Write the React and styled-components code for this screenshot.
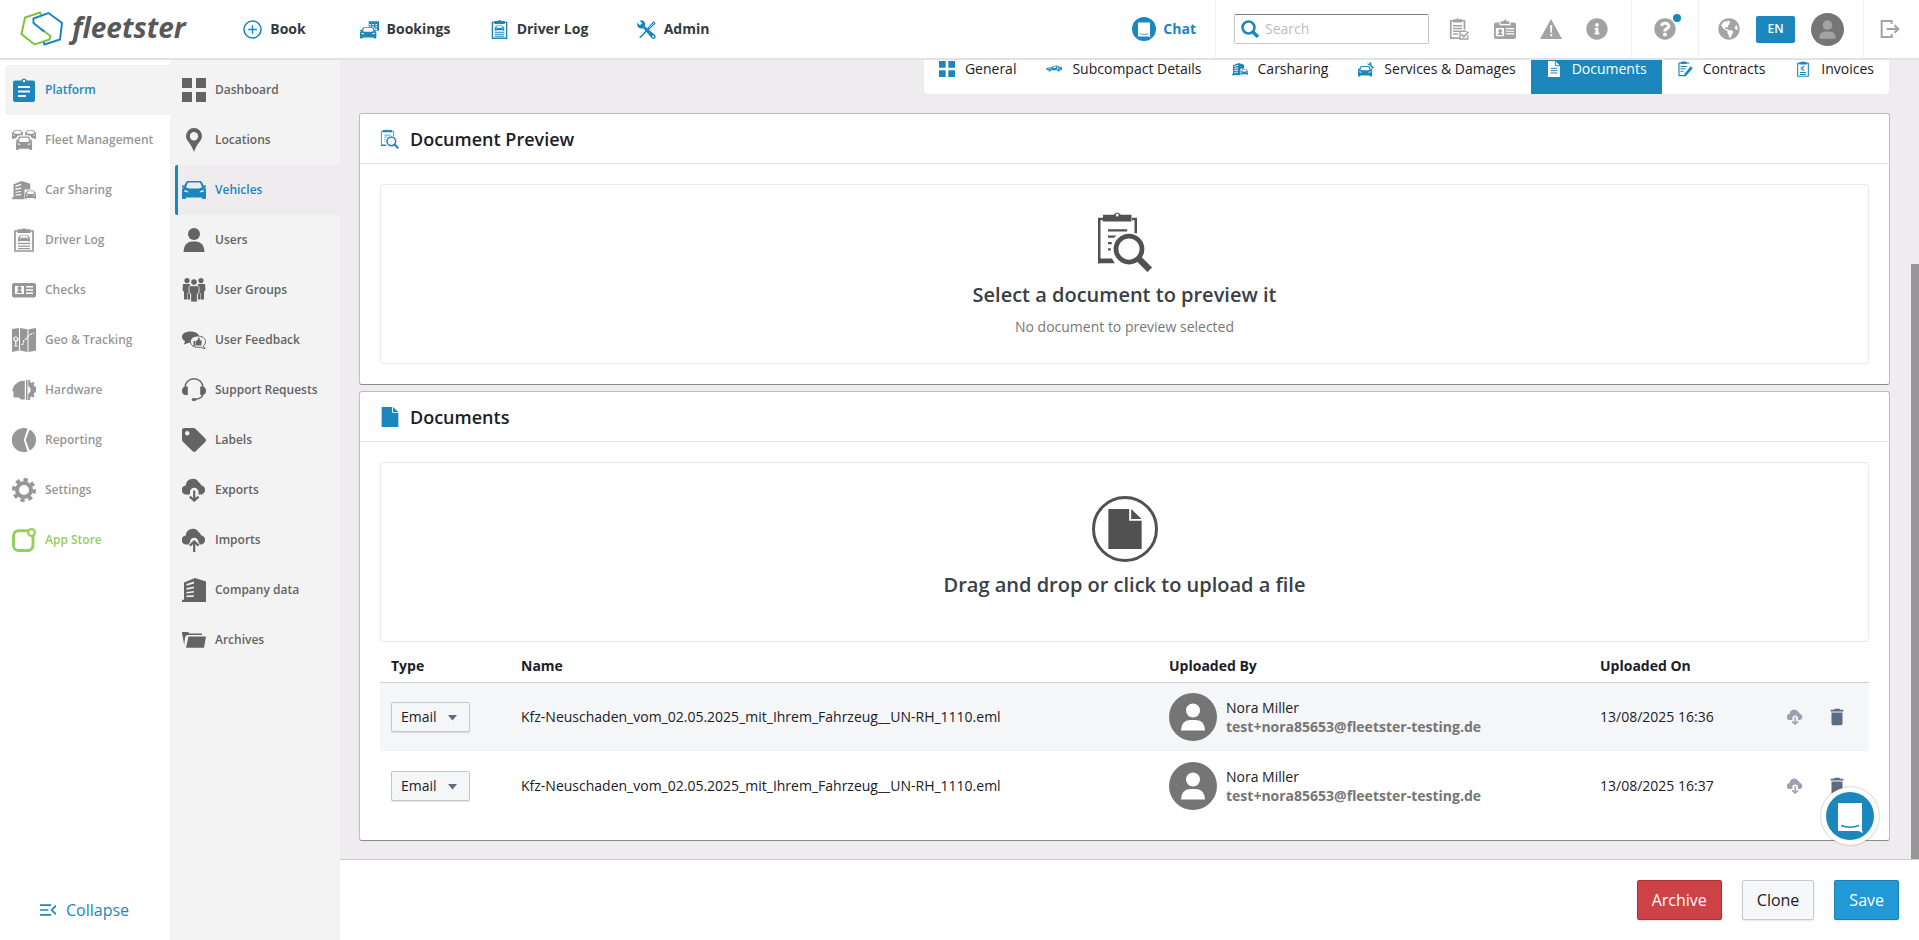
import React from "react";
import styled, { createGlobalStyle } from "styled-components";
import { FaInfoCircle, FaQuestionCircle, FaGlobeAmericas, FaTag } from "react-icons/fa";
import { MdDelete } from "react-icons/md";

const blue = "#1c87bd";

const GlobalStyle = createGlobalStyle`
    * {
        box-sizing: border-box;
    }
    body {
        margin: 0;
        background: #ffffff;
        color: #1b2026;
        font-family: "Open Sans", "Noto Sans", sans-serif;
        font-size: 14px;
        line-height: 20px;
    }
    button, input, select {
        font: inherit;
        color: inherit;
        margin: 0;
    }
    a {
        color: inherit;
        text-decoration: none;
    }
    svg {
        display: block;
        flex-shrink: 0;
    }
    h2, h3, p {
        margin: 0;
    }
`

const Svg = ({ size = 24, children }) => (
    <svg width={size} height={size} viewBox="0 0 24 24" fill="currentColor" aria-hidden="true">
        {children}
    </svg>
)

/* drawings shared by several icons */

const CarShape = () => (
    <>
        <path fillRule="evenodd" d="M5.6 0h12.8l1.4.8 2.6 5.2 1.6 2V17l-.8 1h-2.8l-.6-1.6H4.2L3.6 18H.8L0 17V8l1.6-2L4.2.8zM6 1.5 3.9 6.2 7 7.4h10l3.1-1.2L18 1.5zM2 9l.6 1.8 4 .6L5.4 9.8zm20 0-.6 1.8-4 .6 1.2-1.6z" />
        <path d="M0 4.6h2.6v1.6H0zM21.4 4.6H24v1.6h-2.6z" />
    </>
)

const TowerShape = () => (
    <path fillRule="evenodd" d="M13 0l11 3.6V24H0v-2.2h2V4.400zM4.500 6v1.800L12 5.400V3.600zm0 4v1.800l7.500-1.600V8.400zm0 4v1.600l7.500-1V13zm0 3.600v1.600l7.500-.4v-1.600z" />
)

const CloudShape = () => (
    <path d="M8 16.500H4.500A4.500 4.500 0 0 1 3.800 7.500 7 7 0 0 1 17 4.600 3.500 3.500 0 0 1 19 7.300 4.700 4.700 0 0 1 19.500 16.500H16.500V14a4.200 4.200 0 0 0-8.500 0z" />
)

const ClipFrame = () => (
    <>
        <path d="M4 3.500h16V23H4z" fill="none" stroke="currentColor" strokeWidth="1.600" />
        <path d="M6.500 1.400h4Q12-.8 13.500 1.400h4v3.800h-11z" />
    </>
)

const icons = {
    platform: (
        <>
            <path fillRule="evenodd" d="M3 2.500h6.200a3 3 0 0 1 5.600 0H21a2 2 0 0 1 2 2V22a2 2 0 0 1-2 2H3a2 2 0 0 1-2-2V4.500a2 2 0 0 1 2-2zM6 8v2h12V8zm0 4.500v2h12v-2zM6 17v2h8v-2z" />
            <circle cx="12" cy="3" r="1.200" fill="#ffffff" />
        </>
    ),
    fleet: (
        <>
            <g transform="translate(0 2) scale(.46 .5)"><CarShape /></g>
            <g transform="translate(13 2) scale(.46 .5)"><CarShape /></g>
            <path d="M6 7.500h12l3 4v10H3v-10z" fill="#ffffff" />
            <g transform="translate(4 8.500) scale(.67 .75)"><CarShape /></g>
        </>
    ),
    sharing: (
        <>
            <g transform="translate(0 3) scale(.76)"><TowerShape /></g>
            <path d="M12.500 11.500H24v10H12.500z" fill="#ffffff" />
            <g transform="translate(13 12.500) scale(.46)"><CarShape /></g>
        </>
    ),
    log: (
        <>
            <path d="M3 3h18v20H3z" fill="none" stroke="currentColor" strokeWidth="1.700" />
            <path d="M5.500 1.300H10Q12-1 14 1.300h4.500V5h-13z" />
            <g transform="translate(6 7) scale(.5 .36)"><CarShape /></g>
            <path d="M6 14.800h12v1.300H6zM6 17.400h12v1.300H6zM6 20h12v1.300H6z" />
        </>
    ),
    checks: (
        <path fillRule="evenodd" d="M2 5h20a2 2 0 0 1 2 2v10.500a2 2 0 0 1-2 2H2a2 2 0 0 1-2-2V7a2 2 0 0 1 2-2zm1 3v8h9V8zm2 7q0-2.500 2-2.800a2 2 0 1 1 1 0q2 .3 2 2.800zm9-7v1.500h7V8zm0 3.200v1.500h7v-1.500zm0 3.200V16h7v-1.600z" />
    ),
    geo: (
        <>
            <path d="M0 1l7-1v22.500L0 24zM8 0l7.500 1.200V24L8 22.600zM16.500 1.200L24 0v22.500L16.500 24z" />
            <g fill="none" stroke="#ffffff">
                <circle cx="3.800" cy="11" r="2" strokeWidth="1.200" />
                <path d="M3.800 13v4M2 18h3.600" strokeWidth="1.200" />
                <path d="M9.500 17l2-1.500V13l3-2.500L17 7l5-2" strokeWidth="1.200" strokeDasharray="2.500 1" />
            </g>
        </>
    ),
    hardware: (
        <>
            <path d="M12.800 2.500v19H9l-2-2H1.500V14L0 12l1.500-2V8L7 3.500z" />
            <path d="M14 2h1.500v20H14z" />
            <path fillRule="evenodd" d="M16.200 2h2v2.300l1.600.7 1.600-1.300 1.200 1.300-1 1.800.8 1.700H24v6h-1.600l-.8 2 1 1.700-1.300 1.300-1.700-1-1.400.8V22h-2zM16.200 8v8a4.500 4.500 0 0 0 0-8z" />
        </>
    ),
    pie: (
        <>
            <path d="M15.500.600A12 12 0 1 0 15.500 23.400L11.800 12z" />
            <path d="M17.600 1.400A12 12 0 0 1 17.600 22.600L13.600 12z" />
        </>
    ),
    gear: (
        <>
            <circle cx="12" cy="12" r="7" fill="none" stroke="currentColor" strokeWidth="4" />
            <circle cx="12" cy="12" r="10.200" fill="none" stroke="currentColor" strokeWidth="3.600" strokeDasharray="4.200 3.810" transform="rotate(-4 12 12)" />
        </>
    ),
    store: (
        <>
            <path d="M16 2.800H6.500A5 5 0 0 0 1.500 7.800v9.700a5 5 0 0 0 5 5H16a5 5 0 0 0 5-5V8" fill="none" stroke="currentColor" strokeWidth="3" />
            <circle cx="19.500" cy="4.500" r="3.400" fill="none" stroke="currentColor" strokeWidth="2.200" />
        </>
    ),
    squares: <path d="M0 0h10v10H0zM14 0h10v10H14zM0 14h10v10H0zM14 14h10v10H14z" />,
    pin: <path fillRule="evenodd" d="M12 0a8 8 0 0 1 8 8.200C20 13 14.500 15.500 12 24 9.500 15.500 4 13 4 8.200A8 8 0 0 1 12 0zm0 4a4.200 4.200 0 1 0 0 8.400A4.200 4.200 0 0 0 12 4z" />,
    car: <g transform="translate(0 3)"><CarShape /></g>,
    user: (
        <>
            <circle cx="12" cy="6" r="6" />
            <path d="M1.500 24q.5-9.500 8-10.500h5q7.500 1 8 10.500z" />
        </>
    ),
    group: (
        <>
            <circle cx="5" cy="2.600" r="2.600" />
            <circle cx="19" cy="2.600" r="2.600" />
            <path d="M1 6h7v15.500H5.500V15H5v6.500H2V14L.5 12zM23 6h-7v15.500h2.500V15h.5v6.500h3V14l1.500-2z" />
            <circle cx="12" cy="4" r="3.600" fill="#f3f3f3" />
            <circle cx="12" cy="4" r="2.800" />
            <path d="M8.500 7.800h7q1.500 0 1.500 1.500V15l-1.700 1v8h-6.600v-8L7 15V9.300q0-1.500 1.500-1.500z" stroke="#f3f3f3" strokeWidth=".8" />
        </>
    ),
    feedback: (
        <>
            <path d="M8.500 3.500c5 0 8.500 2.200 8.500 5.500s-3.500 5.200-8.500 5.200L2 16.500l1-3.600C1 12 0 10.800 0 9c0-3.300 3.500-5.500 8.500-5.500z" />
            <path d="M15.700 8c4.500 0 7.800 2.200 7.800 5.600 0 2-.9 3.300-2.200 4.200l1.700 3-4.600-1.600c-5.600.8-10-1.600-10-5.500C8.400 10.300 11.500 8 15.700 8z" fill="#f3f3f3" stroke="currentColor" strokeWidth="1" />
            <path d="M11.500 13h2v5h-2zM14 13l2-1.500V9.800h1.500l.4 2.600h2l-.6 5.200H14z" />
        </>
    ),
    headset: (
        <>
            <path d="M3 9.500a9 8.800 0 0 1 18 0M21 15q0 5.500-8 6.500" fill="none" stroke="currentColor" strokeWidth="1.400" />
            <path d="M5.800 8.500v8.600H3.500Q0 16.500 0 12.800T3.500 8.500zM18.200 8.500v8.600h2.300q3.500-.6 3.500-4.300t-3.500-4.300z" />
            <ellipse cx="12" cy="21.500" rx="2.400" ry="1.500" />
        </>
    ),
    download: (
        <>
            <CloudShape />
            <path d="M12.200 12.500v10M7.800 18.600l4.400 4 4.400-4" fill="none" stroke="currentColor" strokeWidth="2.200" />
        </>
    ),
    upload: (
        <>
            <CloudShape />
            <path d="M12.200 24V13.500M7.800 17.600l4.400-4 4.400 4" fill="none" stroke="#f3f3f3" strokeWidth="4" />
            <path d="M12.200 24V13.500M7.800 17.600l4.400-4 4.400 4" fill="none" stroke="currentColor" strokeWidth="2.200" />
        </>
    ),
    tower: <TowerShape />,
    folder: (
        <>
            <path d="M0 5V4h6l1.500 1.500H20V7H6Q3.500 7 3 10l-.8 7z" />
            <path d="M6.500 8.500H24L22 19.700H4z" />
        </>
    ),
    plus: (
        <g fill="none" stroke="currentColor">
            <circle cx="12" cy="12" r="10.800" strokeWidth="2" />
            <path d="M12 6.500v11M6.500 12h11" strokeWidth="1.800" />
        </g>
    ),
    bookings: (
        <>
            <path fillRule="evenodd" d="M11 1.500h13v12H11zM12 5v1.500h2V5zm3.500 0v1.500h2V5zm4 0v1.500h2V5zM12 8v1.500h2V8zm3.500 0v1.500h2V8zm4 0v1.500h2V8zm0 3v1.500h2V11z" />
            <path d="M3 9l15 .5 4 5V24H0V12z" fill="#ffffff" />
            <g transform="translate(0 9) scale(.86 .8)"><CarShape /></g>
        </>
    ),
    tools: (
        <>
            <path d="M3.500 22.500L14 11.500" stroke="currentColor" strokeWidth="2" />
            <path d="M13 10.500L20.500 2q2.500 0 2.800 2.600L14.800 12.600z" />
            <path d="M15.500 9.800l6-6" stroke="#ffffff" strokeWidth=".9" />
            <path fillRule="evenodd" d="M0 3.500L3.800 6.500 6.400 4.200 3.500.800q4.500-1.200 6.300 2 1.200 2.500.2 5L23 19q1.500 2.500-.2 4.200-2.400 1.500-4.300-.1L8 10.500q-3.300 1-5.800-.8T0 3.500zM20.500 19.600a1.300 1.300 0 1 0 0 2.600 1.300 1.300 0 0 0 0-2.600z" />
        </>
    ),
    tasks: (
        <>
            <path d="M12 22H3V3h15v9.500" fill="none" stroke="currentColor" strokeWidth="1.900" />
            <path d="M5.500 1.400h3.700Q10.500-.6 11.800 1.400h3.700V5h-10z" />
            <path d="M5.500 7.500h10v1.700h-10zM5.500 10.500h10v1.700h-10zM5.500 13.500h7v1.700h-7zM5.500 16.500H11v1.700H5.500z" />
            <path d="M21.500 19v4H13v-8.500h7" fill="none" stroke="currentColor" strokeWidth="1.600" />
            <path d="M14.500 17.500l2.800 3 5-5.500" fill="none" stroke="currentColor" strokeWidth="1.900" />
        </>
    ),
    badge: (
        <>
            <path fillRule="evenodd" d="M2 5h4v3h12V5h4a2 2 0 0 1 2 2v14a2 2 0 0 1-2 2H2a2 2 0 0 1-2-2V7a2 2 0 0 1 2-2zm0 6v9h9v-9zm2 7.500q0-2.200 2-2.500a2 2 0 1 1 1.500 0q2 .3 2 2.500zM13 11v1.300h9V11zm0 2.800v1.300h9v-1.300zm0 2.800V18h9v-1.400z" />
            <path d="M7.200 3.500h3Q12 0 13.800 3.500h3V6.500H7.200z" />
        </>
    ),
    warning: <path fillRule="evenodd" d="M12 1l12 22H0zM11 8l.4 8h1.600l.4-8zm1.200 9.500a1.300 1.300 0 1 0 0 2.600 1.300 1.300 0 0 0 0-2.600z" />,
    logout: (
        <path d="M14 6V2.500H2v19h12V18M8 12h14M17.500 7.500L22 12l-4.500 4.500" fill="none" stroke="currentColor" strokeWidth="2.400" />
    ),
    search: (
        <>
            <circle cx="10" cy="10" r="8" fill="none" stroke="currentColor" strokeWidth="3.400" />
            <path d="M16 16l6.500 6.500" stroke="currentColor" strokeWidth="4.600" />
        </>
    ),
    sidecar: (
        <>
            <path d="M0 12.500l1-2 6-1.200q5-2.800 9-2.600l4.500 2.100 3.500.7v3.500l-1.500 1H2z" />
            <path d="M8.500 10l4-1.800h2.800V10zM16.500 8.300l3 1.700h-3z" fill="#ffffff" />
            <circle cx="5.500" cy="13.500" r="2.600" stroke="#ffffff" strokeWidth=".8" />
            <circle cx="19" cy="13.500" r="2.600" stroke="#ffffff" strokeWidth=".8" />
        </>
    ),
    service: (
        <>
            <g transform="translate(0 7.500) scale(.88)"><CarShape /></g>
            <path d="M14 3.500l3 1L18 1q2.800 1 2 4.500L24 10l-2 1.500-4.500-5q-3 0-3.500-3z" />
        </>
    ),
    textFile: (
        <>
            <path d="M3 0h11l7 7v17H3z" />
            <path d="M14 0v7h7M7 11h10M7 14.500h10M7 18h10" fill="none" stroke={blue} strokeWidth="1.500" />
        </>
    ),
    contract: (
        <>
            <path d="M17 4V3H3v19h9" fill="none" stroke="currentColor" strokeWidth="1.700" />
            <path d="M5.500 1h3Q10-.8 11.500 1h3v3.500h-9zM5 7.500h10V9H5zM5 11h8v1.500H5zM5 14.500h5V16H5z" />
            <path d="M20.500 8l3 3-9 10.500-4 2 .8-4.500z" />
        </>
    ),
    invoice: (
        <>
            <ClipFrame />
            <path d="M14.500 8q-4.500-1-4.500 3t4.500 3M8.500 10.300h4.500M8.500 12h4.500" fill="none" stroke="currentColor" strokeWidth="1.200" />
            <path d="M7.500 16.500h9V18h-9zM7.500 19.500h9V21h-9z" />
        </>
    ),
    preview: (
        <>
            <path d="M1.700 20.500V2.800H3.200M14.800 2.800h1.500v5.700" fill="none" stroke="currentColor" strokeWidth="1" />
            <path d="M1.200 18.600h5.600l1.100 1.900H1.200zM3.200 1.100h4.300Q8.900-.8 10.300 1.100h4.300v2.700H3.200zM5.200 6.900h7.700v.9H5.200zM5.200 9.400h3.400l-1 .9H5.200zM5.200 12h1.500v.9H5.200zM5.200 14.500h1.100v.9H5.200z" />
            <circle cx="8.900" cy="1.200" r=".6" fill="#ffffff" />
            <circle cx="13.600" cy="14.800" r="5.200" fill="none" stroke="currentColor" strokeWidth="1.900" />
            <path d="M17.200 18.400l4.700 4.700" stroke="currentColor" strokeWidth="2.600" />
        </>
    ),
    file: <path d="M2 0h12.500v7H22v17H2zM15.700 0L22 6H15.700z" />,
    collapse: (
        <path d="M0 4.700h16.500M0 12h12.500M0 19.300h16.500M24 5.500L17.500 12 24 18.500" fill="none" stroke="currentColor" strokeWidth="2.600" />
    ),
}

const Icon = ({ name, size }) => <Svg size={size}>{icons[name]}</Svg>

const ChatGlyph = ({ size }) => (
    <svg width={size} height={size} viewBox="0 0 48 48" aria-hidden="true">
        <circle cx="24" cy="24" r="24" fill={blue} />
        <path d="M12 11h24v26.500l1 3.500-4.500-2H12z" fill="#ffffff" />
        <path d="M15 33.500q9 3.500 18 0" fill="none" stroke={blue} strokeWidth="1.500" />
    </svg>
)

const Avatar = ({ size, tone = "#ffffff" }) => (
    <svg width={size} height={size} viewBox="0 0 48 48" aria-hidden="true">
        <circle cx="24" cy="24" r="24" fill="#757575" />
        <circle cx="24" cy="17.500" r="7" fill={tone} />
        <path d="M12 37.500q.5-10.500 9-10.500h6q8.500 0 9 10.500z" fill={tone} />
    </svg>
)

const LogoMark = () => (
    <svg width="44" height="36" viewBox="0 0 44 36" fill="none" strokeWidth="2" aria-hidden="true">
        <path d="M21 4l-1-2.500L5 6.500 1.500 23 14.500 33.500 29.500 28.500 30.500 25 21.500 18" stroke="#7dc243" />
        <path d="M23.500 31l1 2.500L40 28.500 42 12 28.500 2 13.500 7.500V12L24 20.500" stroke={blue} />
    </svg>
)

const Page = styled.div`
    display: grid;
    grid-template-rows: 60px 1fr;
    height: 100vh;
`

const Header = styled.header`
    display: flex;
    align-items: stretch;
    justify-content: space-between;
    background: #ffffff;
    border-bottom: 2px solid #e3e2e3;
    position: relative;
    z-index: 2;
`

const HeaderLeft = styled.div`
    display: flex;
    align-items: center;
`

const Logo = styled.a`
    display: flex;
    align-items: center;
    gap: 8px;
    width: 211px;
    padding-left: 20px;
`

const LogoText = styled.span`
    font-family: "Open Sans", sans-serif;
    font-size: 28px;
    line-height: 36px;
    font-weight: 700;
    font-style: italic;
    color: #585858;
    padding-bottom: 4px;
`

const TopNav = styled.nav`
    display: grid;
    grid-template-columns: 127px repeat(3, 134px);
`

const TopLink = styled.a`
    display: flex;
    align-items: center;
    justify-content: center;
    gap: 8px;
    font-weight: 700;
    color: #343a40;

    svg {
        color: ${blue};
    }
`

const HeaderRight = styled.div`
    display: flex;
`

const HeaderGroup = styled.div`
    display: flex;
    align-items: center;
    gap: ${props => props.$gap || 16}px;
    padding: ${props => props.$pad};
    border-left: 1px solid ${props => props.$plain ? "transparent" : "#eeeeee"};
    color: #a3a3a3;
`

const ChatLink = styled.a`
    display: flex;
    align-items: center;
    gap: 7px;
    font-size: 14px;
    font-weight: 700;
    color: ${blue};
`

const SearchBox = styled.label`
    display: flex;
    align-items: center;
    gap: 6px;
    width: 195px;
    height: 30px;
    padding: 0 6px;
    border: 1px solid #c4c4c4;
    border-top-color: #7b7b7b;
    border-radius: 2px;
    color: ${blue};
`

const SearchInput = styled.input`
    flex: 1;
    min-width: 0;
    padding: 0;
    border: 0;
    outline: 0;
    background: none;

    &::placeholder {
        color: #bdbdbd;
        opacity: 1;
    }
`

const Shortcuts = styled.div`
    display: flex;
    align-items: center;
    gap: 24px;
`

const IconButton = styled.button`
    display: flex;
    position: relative;
    padding: 0;
    border: 0;
    background: none;
    cursor: pointer;
`

const Dot = styled.span`
    position: absolute;
    top: -4px;
    right: -5px;
    width: 8px;
    height: 8px;
    border-radius: 4px;
    background: ${blue};
`

const LangButton = styled.button`
    width: 39px;
    height: 27px;
    padding: 0;
    border: 0;
    border-radius: 2px;
    background: ${blue};
    color: #ffffff;
    font-size: 12px;
    font-weight: 600;
`

const Body = styled.div`
    display: grid;
    grid-template-columns: 170px 170px minmax(0, 1fr);
    min-height: 0;
`

const Sidebar = styled.nav`
    display: flex;
    flex-direction: column;
    padding: 5px 0 5px 5px;
    background: ${props => props.$sub ? "#f3f3f3" : "#ffffff"};
`

const SideLink = styled.a`
    display: flex;
    align-items: center;
    gap: 9px;
    height: 50px;
    padding-left: 7px;
    border-radius: 4px 0 0 4px;
    font-size: 12px;
    font-weight: 600;
    white-space: nowrap;
    color: ${props => props.$color || "#979797"};
    background: ${props => props.$active ? "#f3f3f3" : "none"};
`

const SubLink = styled(SideLink)`
    padding-left: 4px;
    border-left: 3px solid ${props => props.$active ? blue : "transparent"};
    border-radius: 2px 0 0 2px;
    color: ${props => props.$active ? blue : "#646464"};
    background: ${props => props.$active ? "#eeecef" : "none"};
`

const Collapse = styled.button`
    display: flex;
    align-items: center;
    gap: 10px;
    height: 50px;
    margin-top: auto;
    padding: 0 0 0 35px;
    border: 0;
    background: none;
    color: ${blue};
    font-size: 16px;
`

const Content = styled.div`
    display: grid;
    grid-template-rows: minmax(0, 1fr) auto;
    min-height: 0;
`

const Main = styled.main`
    position: relative;
    overflow: hidden;
    padding: 0 29px 18px 19px;
    background: #eeecef;
`

const ScrollThumb = styled.div`
    position: absolute;
    right: 0;
    top: 204px;
    bottom: 0;
    width: 8px;
    background: #969696;
`

/* the tab bar is scrolled partly below the header */
const Tabs = styled.nav`
    display: flex;
    width: fit-content;
    height: 50px;
    margin: -16px 1px 19px auto;
    border-radius: 4px;
    background: #ffffff;
`

const Tab = styled.a`
    display: flex;
    align-items: center;
    gap: 10px;
    padding: 0 15px;
    background: ${props => props.$active ? blue : "none"};
    color: ${props => props.$active ? "#ffffff" : "#1b2026"};

    svg {
        color: ${props => props.$active ? "#ffffff" : blue};
    }
`

const Card = styled.section`
    margin-bottom: 6px;
    padding-bottom: 20px;
    border: 1px solid #bdbcbe;
    border-bottom-color: #8b8b8b;
    border-radius: 3px;
    background: #ffffff;
`

const CardHead = styled.div`
    display: flex;
    align-items: center;
    gap: 10px;
    height: 50px;
    margin-bottom: 20px;
    padding: 0 20px;
    border-bottom: 1px solid #e4e4e4;

    svg {
        color: ${blue};
    }
`

const CardTitle = styled.h2`
    font-size: 18px;
    line-height: 24px;
    font-weight: 600;
`

const Panel = styled.div`
    display: flex;
    flex-direction: column;
    align-items: center;
    width: calc(100% - 40px);
    height: 180px;
    margin: 0 20px;
    padding-top: 27px;
    border: 1px solid #e9e9e9;
    border-radius: 3px;
    background: none;
    color: #515151;
`

const DropZone = styled(Panel).attrs({ as: "button", type: "button" })`
    padding: 33px 0 0;
    cursor: pointer;
`

const FileCircle = styled.span`
    display: flex;
    align-items: center;
    justify-content: center;
    width: 66px;
    height: 66px;
    border: 3px solid #515151;
    border-radius: 50%;
`

const PanelTitle = styled.h3`
    margin-top: 8px;
    font-size: 20px;
    line-height: 30px;
    font-weight: 600;
    color: #3a4045;
`

const PanelText = styled.p`
    margin-top: 7px;
    color: #777777;
`

const Table = styled.table`
    width: calc(100% - 40px);
    margin: 0 20px;
    border-collapse: collapse;
    table-layout: fixed;
`

const Th = styled.th`
    width: ${props => props.$width || "auto"};
    height: 40px;
    padding: 14px 11px 5px;
    border-bottom: 1px solid #d0d1d3;
    text-align: left;
    font-weight: 700;
`

const Row = styled.tr`
    background: ${props => props.$striped ? "#f5f6f8" : "#ffffff"};
`

const Td = styled.td`
    height: 69px;
    padding: 0 11px;
`

const SelectBox = styled.label`
    display: flex;
    position: relative;
    width: 79px;

    svg {
        position: absolute;
        right: 13px;
        top: 13px;
        pointer-events: none;
    }
`

const TypeSelect = styled.select`
    appearance: none;
    width: 100%;
    height: 30px;
    padding: 0 9px;
    border: 1px solid #c4c6c9;
    border-radius: 2px;
    background: #f5f6f8;
    box-shadow: 0 1px 1px rgba(0, 0, 0, 0.1);
`

const Person = styled.div`
    display: flex;
    align-items: center;
    gap: 9px;
`

const PersonText = styled.div`
    display: flex;
    flex-direction: column;
    line-height: 19px;
`

const Mail = styled.span`
    font-weight: 700;
    color: #757575;
`

const Actions = styled.div`
    display: flex;
    align-items: center;
    gap: 23px;
    padding-left: 1px;
    color: #5f6b80;
`

const DownloadButton = styled(IconButton)`
    color: #9aa2ae;
`

const Footer = styled.footer`
    display: flex;
    justify-content: flex-end;
    gap: 20px;
    padding: 20px;
    border-top: 1px solid #cccccc;
    background: #ffffff;
`

const tones = {
    danger: { bg: "#cd4246", line: "#ac2f33", text: "#ffffff" },
    plain: { bg: "#f6f7f9", line: "#c8cacd", text: "#1b2026" },
    primary: { bg: "#2199d6", line: "#1c7fb1", text: "#ffffff" },
}

const Button = styled.button`
    height: 40px;
    padding: 0 14px;
    border: 1px solid ${props => tones[props.$tone].line};
    border-radius: 2px;
    background: ${props => tones[props.$tone].bg};
    box-shadow: 0 1px 2px rgba(0, 0, 0, 0.1);
    color: ${props => tones[props.$tone].text};
    font-size: 16px;
`

const ChatBubble = styled.button`
    display: flex;
    align-items: center;
    justify-content: center;
    position: fixed;
    right: 40px;
    bottom: 95px;
    width: 58px;
    height: 58px;
    padding: 0;
    border: 0;
    border-radius: 50%;
    background: #ffffff;
    box-shadow: 0 0 2px rgba(0, 0, 0, 0.4);
`

const sideItems = [
    { label: "Platform", icon: "platform", active: true, color: blue },
    { label: "Fleet Management", icon: "fleet" },
    { label: "Car Sharing", icon: "sharing" },
    { label: "Driver Log", icon: "log" },
    { label: "Checks", icon: "checks" },
    { label: "Geo & Tracking", icon: "geo" },
    { label: "Hardware", icon: "hardware" },
    { label: "Reporting", icon: "pie" },
    { label: "Settings", icon: "gear" },
    { label: "App Store", icon: "store", color: "#95cf5b" },
]

const subItems = [
    { label: "Dashboard", icon: "squares" },
    { label: "Locations", icon: "pin" },
    { label: "Vehicles", icon: "car", active: true },
    { label: "Users", icon: "user" },
    { label: "User Groups", icon: "group" },
    { label: "User Feedback", icon: "feedback" },
    { label: "Support Requests", icon: "headset" },
    { label: "Labels", Glyph: FaTag },
    { label: "Exports", icon: "download" },
    { label: "Imports", icon: "upload" },
    { label: "Company data", icon: "tower" },
    { label: "Archives", icon: "folder" },
]

const tabItems = [
    { label: "General", icon: "squares" },
    { label: "Subcompact Details", icon: "sidecar" },
    { label: "Carsharing", icon: "sharing" },
    { label: "Services & Damages", icon: "service" },
    { label: "Documents", icon: "textFile", active: true },
    { label: "Contracts", icon: "contract" },
    { label: "Invoices", icon: "invoice" },
]

const documents = [
    {
        name: "Kfz-Neuschaden_vom_02.05.2025_mit_Ihrem_Fahrzeug__UN-RH_1110.eml",
        user: "Nora Miller",
        mail: "test+nora85653@fleetster-testing.de",
        date: "13/08/2025 16:36",
    },
    {
        name: "Kfz-Neuschaden_vom_02.05.2025_mit_Ihrem_Fahrzeug__UN-RH_1110.eml",
        user: "Nora Miller",
        mail: "test+nora85653@fleetster-testing.de",
        date: "13/08/2025 16:37",
    },
]

const TopBar = () => (
    <Header>
        <HeaderLeft>
            <Logo href="#">
                <LogoMark />
                <LogoText>fleetster</LogoText>
            </Logo>
            <TopNav>
                <TopLink href="#"><Icon name="plus" size={19} />Book</TopLink>
                <TopLink href="#"><Icon name="bookings" size={19} />Bookings</TopLink>
                <TopLink href="#"><Icon name="log" size={19} />Driver Log</TopLink>
                <TopLink href="#"><Icon name="tools" size={19} />Admin</TopLink>
            </TopNav>
        </HeaderLeft>
        <HeaderRight>
            <HeaderGroup $plain $pad="0 19px">
                <ChatLink href="#"><ChatGlyph size={24} />Chat</ChatLink>
            </HeaderGroup>
            <HeaderGroup $pad="0 23px 0 18px" $gap={19}>
                <SearchBox>
                    <Icon name="search" size={18} />
                    <SearchInput placeholder="Search" aria-label="Search" />
                </SearchBox>
                <Shortcuts>
                    <IconButton aria-label="Tasks"><Icon name="tasks" size={22} /></IconButton>
                    <IconButton aria-label="Licence checks"><Icon name="badge" size={22} /></IconButton>
                    <IconButton aria-label="Warnings"><Icon name="warning" size={22} /></IconButton>
                    <IconButton aria-label="Info"><FaInfoCircle size={22} /></IconButton>
                </Shortcuts>
            </HeaderGroup>
            <HeaderGroup $pad="0 22px">
                <IconButton aria-label="Help"><FaQuestionCircle size={22} /><Dot /></IconButton>
            </HeaderGroup>
            <HeaderGroup $pad="0 19px">
                <FaGlobeAmericas size={22} />
                <LangButton>EN</LangButton>
                <IconButton aria-label="Profile"><Avatar size={33} tone="#a3a3a3" /></IconButton>
            </HeaderGroup>
            <HeaderGroup $pad="0 19px 0 16px">
                <IconButton aria-label="Log out"><Icon name="logout" size={20} /></IconButton>
            </HeaderGroup>
        </HeaderRight>
    </Header>
)

const DocumentTable = () => (
    <Table>
        <thead>
            <tr>
                <Th scope="col" $width="130px">Type</Th>
                <Th scope="col">Name</Th>
                <Th scope="col" $width="431px">Uploaded By</Th>
                <Th scope="col" $width="186px">Uploaded On</Th>
                <Th $width="94px" aria-label="Actions" />
            </tr>
        </thead>
        <tbody>
            {documents.map((doc, i) => (
                <Row key={doc.date} $striped={i % 2 === 0}>
                    <Td>
                        <SelectBox>
                            <TypeSelect aria-label="Document type" defaultValue="email">
                                <option value="email">Email</option>
                            </TypeSelect>
                            <svg width="9" height="6" viewBox="0 0 9 6" fill="#5f6b80"><path d="M0 0h9L4.500 5.500z" /></svg>
                        </SelectBox>
                    </Td>
                    <Td>{doc.name}</Td>
                    <Td>
                        <Person>
                            <Avatar size={48} />
                            <PersonText>
                                <span>{doc.user}</span>
                                <Mail>{doc.mail}</Mail>
                            </PersonText>
                        </Person>
                    </Td>
                    <Td>{doc.date}</Td>
                    <Td>
                        <Actions>
                            <DownloadButton aria-label="Download"><Icon name="download" size={16} /></DownloadButton>
                            <IconButton aria-label="Delete"><MdDelete size={22} /></IconButton>
                        </Actions>
                    </Td>
                </Row>
            ))}
        </tbody>
    </Table>
)

const App = () => (
    <Page>
        <GlobalStyle />
        <TopBar />
        <Body>
            <Sidebar>
                {sideItems.map(({ label, icon, active, color }) => (
                    <SideLink href="#" key={label} $active={active} $color={color}>
                        <Icon name={icon} size={24} />
                        {label}
                    </SideLink>
                ))}
                <Collapse><Icon name="collapse" size={16} />Collapse</Collapse>
            </Sidebar>
            <Sidebar $sub>
                {subItems.map(({ label, icon, Glyph, active }) => (
                    <SubLink href="#" key={label} $active={active}>
                        {Glyph ? <Glyph size={24} /> : <Icon name={icon} size={24} />}
                        {label}
                    </SubLink>
                ))}
            </Sidebar>
            <Content>
                <Main>
                    <Tabs>
                        {tabItems.map(({ label, icon, active }) => (
                            <Tab href="#" key={label} $active={active}>
                                <Icon name={icon} size={16} />
                                {label}
                            </Tab>
                        ))}
                    </Tabs>
                    <Card>
                        <CardHead>
                            <Icon name="preview" size={20} />
                            <CardTitle>Document Preview</CardTitle>
                        </CardHead>
                        <Panel>
                            <Icon name="preview" size={60} />
                            <PanelTitle>Select a document to preview it</PanelTitle>
                            <PanelText>No document to preview selected</PanelText>
                        </Panel>
                    </Card>
                    <Card>
                        <CardHead>
                            <Icon name="file" size={20} />
                            <CardTitle>Documents</CardTitle>
                        </CardHead>
                        <DropZone>
                            <FileCircle><Icon name="file" size={40} /></FileCircle>
                            <PanelTitle as="span">Drag and drop or click to upload a file</PanelTitle>
                        </DropZone>
                        <DocumentTable />
                    </Card>
                    <ScrollThumb />
                </Main>
                <Footer>
                    <Button $tone="danger">Archive</Button>
                    <Button $tone="plain">Clone</Button>
                    <Button $tone="primary">Save</Button>
                </Footer>
            </Content>
        </Body>
        <ChatBubble aria-label="Open chat"><ChatGlyph size={48} /></ChatBubble>
    </Page>
)

export default App;
